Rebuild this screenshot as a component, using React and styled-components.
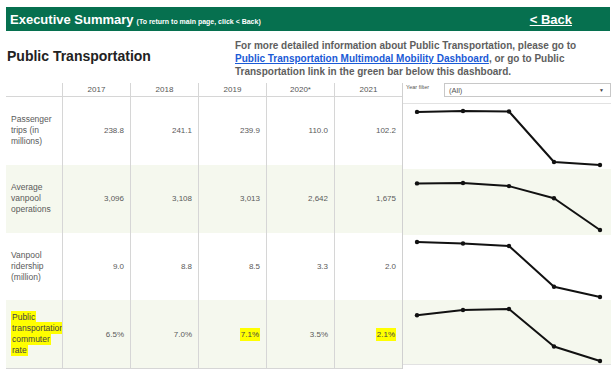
import styled, { createGlobalStyle } from "styled-components";

const GlobalStyle = createGlobalStyle`
  body { margin: 0; background: #fff; font-family: "Liberation Sans", Arial, sans-serif; }
`;

const years = ["2017", "2018", "2019", "2020*", "2021"];

// top/bottom are the pixel band each sparkline is scaled into
const metrics = [
  { label: "Passenger trips (in millions)", values: [238.8, 241.1, 239.9, 110.0, 102.2], fmt: (v) => v.toFixed(1), top: 7, bottom: 61 },
  { label: "Average vanpool operations", values: [3096, 3108, 3013, 2642, 1675], fmt: (v) => v.toLocaleString("en-US"), top: 14, bottom: 61 },
  { label: "Vanpool ridership (million)", values: [9.0, 8.8, 8.5, 3.3, 2.0], fmt: (v) => v.toFixed(1), top: 7, bottom: 62 },
  { label: "Public transportation commuter rate", values: [6.5, 7.0, 7.1, 3.5, 2.1], fmt: (v) => v.toFixed(1) + "%", top: 9, bottom: 61, mark: true, marked: [2, 4] },
];

const xs = [14, 60, 106, 151, 197];

const Page = styled.div`
  width: 604px;
  padding: 7px 5px 0 6px;
`;

const TopBar = styled.div`
  height: 24px;
  background: #06704f;
  display: flex;
  align-items: center;
  justify-content: space-between;
  padding: 0 38px 0 4px;
  color: #fff;
`;

const BarTitle = styled.div`
  font-size: 13px;
  font-weight: bold;
  white-space: nowrap;
`;

const BarNote = styled.span`
  font-size: 7px;
  margin-left: 3px;
`;

const BackLink = styled.a`
  font-size: 13px;
  font-weight: bold;
  color: #fff;
  text-decoration: underline;
  cursor: pointer;
`;

const Intro = styled.div`
  display: flex;
  align-items: center;
  margin-top: 8px;
`;

const SectionTitle = styled.h1`
  width: 228px;
  margin: 0 0 6px 1px;
  font-size: 14px;
  font-weight: bold;
  color: #222;
`;

const Info = styled.p`
  margin: 0;
  font-size: 10px;
  line-height: 13px;
  font-weight: bold;
  color: #5e5e5e;
`;

const InfoLink = styled.a`
  color: #1a5ad6;
  text-decoration: underline;
`;

const Main = styled.div`
  display: flex;
  margin-top: 5px;
`;

const Table = styled.div`
  display: grid;
  grid-template-columns: 56px repeat(5, 68px);
  grid-template-rows: 14px repeat(4, 67.75px);
  border-bottom: 1px solid #d6d6d6;
`;

const HeadCell = styled.div`
  display: flex;
  align-items: center;
  justify-content: center;
  font-size: 8px;
  color: #555;
  border-left: ${(p) => (p.$first ? "none" : "1px solid #d6d6d6")};
  border-bottom: 1px solid #d6d6d6;
`;

const Cell = styled.div`
  display: flex;
  align-items: center;
  justify-content: ${(p) => (p.$label ? "flex-start" : "flex-end")};
  padding: ${(p) => (p.$label ? "0 0 0 5px" : "0 6px 0 0")};
  font-size: ${(p) => (p.$label ? "8.5px" : "8px")};
  line-height: 11px;
  color: #5a5a5a;
  background: ${(p) => (p.$shade ? "#f5f8ee" : "#fff")};
  border-left: ${(p) => (p.$label ? "none" : "1px solid #d6d6d6")};
  overflow: visible;
  white-space: ${(p) => (p.$label ? "normal" : "nowrap")};
`;

const Mark = styled.span`
  background: #ffff00;
  color: #444;
  padding: 1px 1px;
  box-decoration-break: clone;
  -webkit-box-decoration-break: clone;
`;

const ChartPanel = styled.div`
  width: 208px;
  border-left: 1px solid #d0d0d0;
  display: flex;
  flex-direction: column;
`;

const FilterRow = styled.div`
  height: 20px;
  display: flex;
  align-items: flex-start;
  justify-content: space-between;
  border-bottom: 1px solid #e2e2e2;
`;

const FilterLabel = styled.span`
  font-size: 5.5px;
  color: #555;
  margin: 1px 0 0 3px;
`;

const Select = styled.div`
  width: 155px;
  height: 12px;
  border: 1px solid #c8c8c8;
  display: flex;
  align-items: center;
  justify-content: space-between;
  padding: 0 6px 0 4px;
  box-sizing: content-box;
  font-size: 7.5px;
  color: #555;
`;

const Caret = styled.span`
  font-size: 5px;
  color: #444;
`;

const SparkRow = styled.div`
  height: 65.25px;
  background: ${(p) => (p.$shade ? "#f5f8ee" : "#fff")};
  border-bottom: ${(p) => (p.$last ? "1px solid #e2e2e2" : "none")};
  box-sizing: border-box;
`;

function Spark({ m }) {
  const max = Math.max(...m.values);
  const min = Math.min(...m.values);
  const pts = m.values.map((v, i) => [xs[i], m.top + ((max - v) / (max - min)) * (m.bottom - m.top)]);
  return (
    <svg width="208" height="65" viewBox="0 0 208 65">
      <polyline points={pts.map((p) => p.join(",")).join(" ")} fill="none" stroke="#111" strokeWidth="2" strokeLinejoin="round" />
      {pts.map(([x, y], i) => (
        <circle key={i} cx={x} cy={y} r="2.2" fill="#111" />
      ))}
    </svg>
  );
}

export default function App() {
  return (
    <Page>
      <GlobalStyle />
      <TopBar>
        <BarTitle>
          Executive Summary<BarNote>(To return to main page, click &lt; Back)</BarNote>
        </BarTitle>
        <BackLink>&lt; Back</BackLink>
      </TopBar>

      <Intro>
        <SectionTitle>Public Transportation</SectionTitle>
        <Info>
          For more detailed information about Public Transportation, please go to
          <br />
          <InfoLink>Public Transportation Multimodal Mobility Dashboard</InfoLink>, or go to Public
          <br />
          Transportation link in the green bar below this dashboard.
        </Info>
      </Intro>

      <Main>
        <Table>
          <HeadCell $first />
          {years.map((y) => (
            <HeadCell key={y}>{y}</HeadCell>
          ))}
          {metrics.map((m, r) => [
            <Cell key={m.label} $label $shade={r % 2 === 1}>
              <div>{m.mark ? <Mark>{m.label}</Mark> : m.label}</div>
            </Cell>,
            ...m.values.map((v, i) => (
              <Cell key={m.label + i} $shade={r % 2 === 1}>
                {m.marked && m.marked.includes(i) ? <Mark>{m.fmt(v)}</Mark> : m.fmt(v)}
              </Cell>
            )),
          ])}
        </Table>

        <ChartPanel>
          <FilterRow>
            <FilterLabel>Year filter</FilterLabel>
            <Select>
              <span>(All)</span>
              <Caret>▼</Caret>
            </Select>
          </FilterRow>
          {metrics.map((m, r) => (
            <SparkRow key={m.label} $shade={r % 2 === 1} $last={r === metrics.length - 1}>
              <Spark m={m} />
            </SparkRow>
          ))}
        </ChartPanel>
      </Main>
    </Page>
  );
}
